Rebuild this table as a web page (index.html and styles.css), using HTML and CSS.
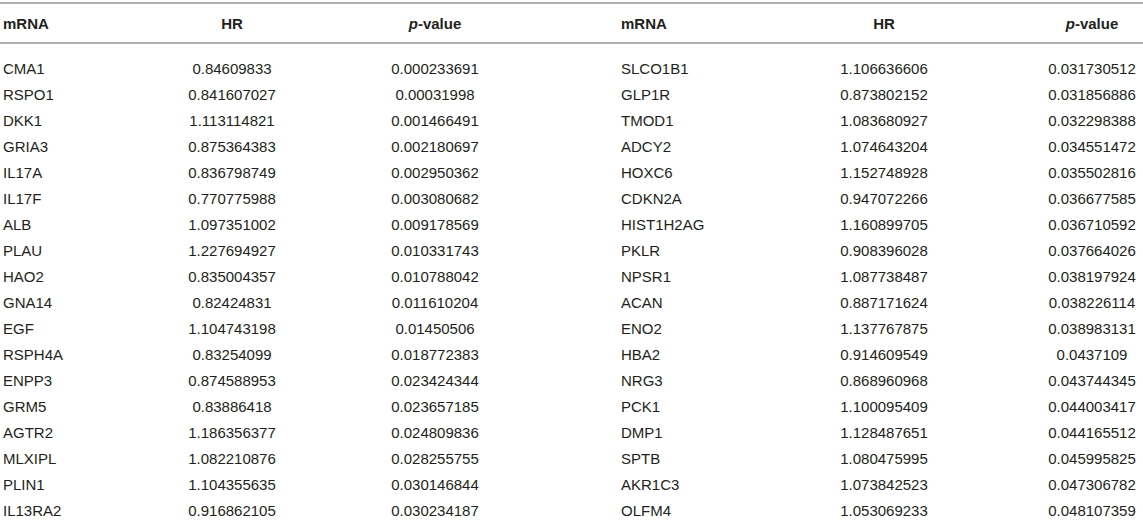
FILE: index.html
```html
<!DOCTYPE html>
<html>
<head>
<meta charset="utf-8">
<link rel="stylesheet" href="styles.css">
</head>
<body>
<table class="data">
  <colgroup>
    <col class="c1"><col class="c2"><col class="c3"><col class="c4"><col class="c5"><col class="c6">
  </colgroup>
  <thead>
    <tr>
      <th class="name">mRNA</th><th>HR</th><th><i>p</i>-value</th>
      <th class="name n2">mRNA</th><th>HR</th><th><i>p</i>-value</th>
    </tr>
  </thead>
  <tbody>
    <tr class="first"><td class="name">CMA1</td><td>0.84609833</td><td>0.000233691</td><td class="name n2">SLCO1B1</td><td>1.106636606</td><td>0.031730512</td></tr>
    <tr><td class="name">RSPO1</td><td>0.841607027</td><td>0.00031998</td><td class="name n2">GLP1R</td><td>0.873802152</td><td>0.031856886</td></tr>
    <tr><td class="name">DKK1</td><td>1.113114821</td><td>0.001466491</td><td class="name n2">TMOD1</td><td>1.083680927</td><td>0.032298388</td></tr>
    <tr><td class="name">GRIA3</td><td>0.875364383</td><td>0.002180697</td><td class="name n2">ADCY2</td><td>1.074643204</td><td>0.034551472</td></tr>
    <tr><td class="name">IL17A</td><td>0.836798749</td><td>0.002950362</td><td class="name n2">HOXC6</td><td>1.152748928</td><td>0.035502816</td></tr>
    <tr><td class="name">IL17F</td><td>0.770775988</td><td>0.003080682</td><td class="name n2">CDKN2A</td><td>0.947072266</td><td>0.036677585</td></tr>
    <tr><td class="name">ALB</td><td>1.097351002</td><td>0.009178569</td><td class="name n2">HIST1H2AG</td><td>1.160899705</td><td>0.036710592</td></tr>
    <tr><td class="name">PLAU</td><td>1.227694927</td><td>0.010331743</td><td class="name n2">PKLR</td><td>0.908396028</td><td>0.037664026</td></tr>
    <tr><td class="name">HAO2</td><td>0.835004357</td><td>0.010788042</td><td class="name n2">NPSR1</td><td>1.087738487</td><td>0.038197924</td></tr>
    <tr><td class="name">GNA14</td><td>0.82424831</td><td>0.011610204</td><td class="name n2">ACAN</td><td>0.887171624</td><td>0.038226114</td></tr>
    <tr><td class="name">EGF</td><td>1.104743198</td><td>0.01450506</td><td class="name n2">ENO2</td><td>1.137767875</td><td>0.038983131</td></tr>
    <tr><td class="name">RSPH4A</td><td>0.83254099</td><td>0.018772383</td><td class="name n2">HBA2</td><td>0.914609549</td><td>0.0437109</td></tr>
    <tr><td class="name">ENPP3</td><td>0.874588953</td><td>0.023424344</td><td class="name n2">NRG3</td><td>0.868960968</td><td>0.043744345</td></tr>
    <tr><td class="name">GRM5</td><td>0.83886418</td><td>0.023657185</td><td class="name n2">PCK1</td><td>1.100095409</td><td>0.044003417</td></tr>
    <tr><td class="name">AGTR2</td><td>1.186356377</td><td>0.024809836</td><td class="name n2">DMP1</td><td>1.128487651</td><td>0.044165512</td></tr>
    <tr><td class="name">MLXIPL</td><td>1.082210876</td><td>0.028255755</td><td class="name n2">SPTB</td><td>1.080475995</td><td>0.045995825</td></tr>
    <tr><td class="name">PLIN1</td><td>1.104355635</td><td>0.030146844</td><td class="name n2">AKR1C3</td><td>1.073842523</td><td>0.047306782</td></tr>
    <tr><td class="name">IL13RA2</td><td>0.916862105</td><td>0.030234187</td><td class="name n2">OLFM4</td><td>1.053069233</td><td>0.048107359</td></tr>
  </tbody>
</table>
</body>
</html>
```

FILE: styles.css
```css
html, body {
  margin: 0;
  padding: 0;
  background: #ffffff;
}

body {
  padding-top: 2px;
  font-family: "Liberation Sans", Arial, sans-serif;
  font-size: 15px;
  color: #231f20;
}

.data {
  width: 1143px;
  border-collapse: collapse;
  table-layout: fixed;
}

.c1 { width: 150px; }
.c2 { width: 164px; }
.c3 { width: 242px; }
.c4 { width: 171px; }
.c5 { width: 314px; }
.c6 { width: 102px; }

.data th,
.data td {
  padding: 0;
  text-align: center;
  white-space: nowrap;
}

.data thead th {
  height: 38px;
  font-weight: bold;
  border-top: 2px solid #b0b0b0;
  border-bottom: 2px solid #b0b0b0;
}

.data thead th i {
  font-weight: bold;
}

.data tbody td {
  height: 26px;
}

.data tbody tr.first td {
  padding-top: 11px;
}

.data .name {
  text-align: left;
  padding-left: 3px;
}

.data .n2 {
  padding-left: 65px;
}
```
